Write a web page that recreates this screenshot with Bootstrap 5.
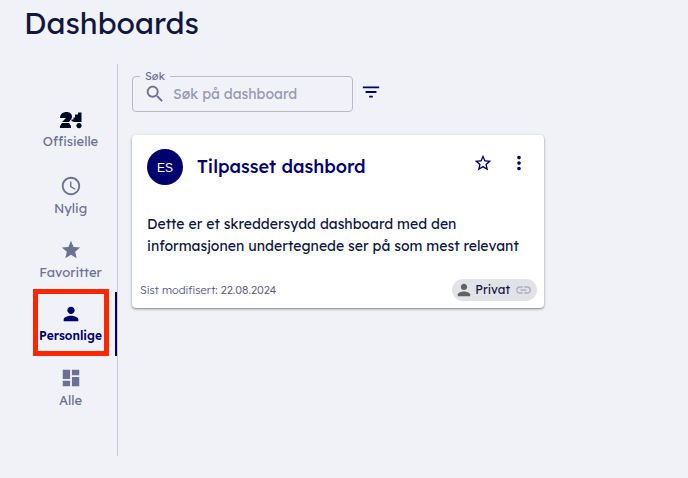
<!DOCTYPE html>
<html lang="no">
<head>
<meta charset="utf-8">
<meta name="viewport" content="width=device-width, initial-scale=1">
<title>Dashboards</title>
<link href="https://cdn.jsdelivr.net/npm/bootstrap@5.3.0/dist/css/bootstrap.min.css" rel="stylesheet">
<style>
  :root { --ink: #0f1740; --brand: #00006e; --muted: #6b7094; }
  body { background: #f1f2f8; color: var(--ink); font-family: "Lexend Deca", Lexend, Inter, sans-serif; font-weight: 400; }
  svg { display: block; fill: currentColor; }
  .page-title { font-size: 30px; line-height: 40px; font-weight: 400; padding: 3px 24px 21px; }
  .side-nav { width: 94px; height: 392px; border-right: 1px solid #c9cad3; }
  .side-nav .nav-link { height: 64px; padding: 0; gap: 2px; color: var(--muted); font-size: 13px; line-height: 18px; font-weight: 400; }
  .side-nav .nav-link.active { color: var(--brand); font-size: 12px; font-weight: 600; box-shadow: inset -2px 0 var(--brand); }
  .brand-mark { fill: #020a24; }
  .marker { position: absolute; left: 9px; right: 8px; top: -3px; bottom: 0; border: 5px solid #ff2600; pointer-events: none; }
  .main-area { padding: 8px 14px; }
  .toolbar { padding: 4px 0 23px; }
  .search-box { width: 221px; height: 36px; border: 1px solid #b8bac4; border-radius: 4px; padding: 0 13px 0 11px; gap: 7px; color: var(--muted); }
  .search-box label { position: absolute; left: 7px; top: -8px; padding: 0 5px; background: #f1f2f8; font-size: 11px; line-height: 14px; }
  .search-box input { font-size: 14px; line-height: 20px; color: var(--ink); }
  .search-box input::placeholder { color: #9598b2; opacity: 1; }
  .icon-btn { color: var(--brand); line-height: 1; }
  .dash-card { max-width: 412px; border-radius: 4px; box-shadow: 0 1px 2px rgba(0,0,0,.4), 0 1px 4px rgba(0,0,0,.1); color: var(--ink); }
  .dash-head { padding: 14px 15px 0; }
  .avatar { width: 36px; height: 36px; background: var(--brand); font: 12px/20px "Liberation Sans", sans-serif; padding-top: 2px; }
  .dash-title { font-size: 18px; line-height: 24px; font-weight: 500; color: var(--brand); padding-left: 14px; }
  .dash-text { font-size: 14px; line-height: 22px; padding: 28px 15px 22px; }
  .dash-foot { padding: 0 7px 7px 8px; }
  .dash-date { font-size: 11px; line-height: 16px; font-weight: 300; color: #4f5580; }
  .privacy { height: 22px; padding: 0 4px 0 5px; background: #e2e3e9; font-size: 12px; line-height: 16px; }
  .privacy .who { fill: #616161; }
  .privacy .chain { fill: #adb0c0; }
</style>
<script src="https://cdn.jsdelivr.net/npm/bootstrap@5.3.0/dist/js/bootstrap.bundle.min.js"></script>
</head>
<body>
<h1 class="page-title m-0">Dashboards</h1>
<div class="d-flex">
  <nav class="side-nav nav flex-column flex-nowrap justify-content-center flex-shrink-0 ms-4" aria-label="Kategorier">
    <a href="#" class="nav-link pb-1 d-flex flex-column align-items-center justify-content-center">
      <svg class="brand-mark" width="22" height="20" viewBox="0 0 22 20"><path d="M0 8C0 4 3 2 6.500 2 12 2 13.500 7 10.500 10L9 12H2l4-4zM0 18v-2l2-3h7l2 3v2zM11.500 9.500h2v-2h1.500v-3h3V2.500h3.500V12H14l-2.500-1zM19 13a2.600 2.600 0 1 1-.01 0z"/></svg>
      Offisielle
    </a>
    <a href="#" class="nav-link d-flex flex-column align-items-center justify-content-center">
      <svg width="22" height="22" viewBox="0 0 24 24"><path d="M11.990 2C6.470 2 2 6.480 2 12s4.470 10 9.990 10C17.520 22 22 17.520 22 12S17.520 2 11.990 2zM12 20c-4.420 0-8-3.580-8-8s3.580-8 8-8 8 3.580 8 8-3.580 8-8 8zm.5-13H11v6l5.250 3.150.75-1.230-4.500-2.670z"/></svg>
      Nylig
    </a>
    <a href="#" class="nav-link d-flex flex-column align-items-center justify-content-center">
      <svg width="22" height="22" viewBox="0 0 24 24"><path d="M12 17.270 18.180 21l-1.640-7.030L22 9.240l-7.190-.61L12 2 9.190 8.630 2 9.240l5.460 4.730L5.820 21z"/></svg>
      Favoritter
    </a>
    <a href="#" class="nav-link active position-relative d-flex flex-column align-items-center justify-content-center" aria-current="page">
      <svg width="22" height="22" viewBox="0 0 24 24"><path d="M12 12c2.210 0 4-1.790 4-4s-1.790-4-4-4-4 1.790-4 4 1.790 4 4 4zm0 2c-2.670 0-8 1.340-8 4v2h16v-2c0-2.660-5.330-4-8-4z"/></svg>
      Personlige
      <span class="marker"></span>
    </a>
    <a href="#" class="nav-link d-flex flex-column align-items-center justify-content-center">
      <svg width="22" height="22" viewBox="0 0 24 24"><path d="M3 13h8V3H3v10zm0 8h8v-6H3v6zm10 0h8V11h-8v10zm0-18v6h8V3h-8z"/></svg>
      Alle
    </a>
  </nav>
  <main class="main-area flex-grow-1">
    <div class="toolbar d-flex align-items-center">
      <div class="search-box position-relative d-flex align-items-center">
        <label for="search">Søk</label>
        <svg width="22" height="22" viewBox="0 0 24 24" class="flex-shrink-0"><path d="M15.500 14h-.79l-.28-.27C15.410 12.590 16 11.110 16 9.500 16 5.910 13.090 3 9.500 3S3 5.910 3 9.500 5.910 16 9.500 16c1.610 0 3.090-.59 4.230-1.570l.27.28v.79l5 4.990L20.490 19l-4.990-5zm-6 0C7.010 14 5 11.990 5 9.500S7.010 5 9.500 5 14 7.010 14 9.500 11.990 14 9.500 14z"/></svg>
        <input id="search" type="text" class="form-control border-0 bg-transparent shadow-none p-0" placeholder="Søk på dashboard">
      </div>
      <button type="button" class="btn p-0 pb-1 ms-2 border-0 icon-btn" aria-label="Filter"><svg width="20" height="22" viewBox="1 0 22 24"><path d="M10 18h4v-2h-4v2zM3 6v2h18V6H3zm3 7h12v-2H6v2z"/></svg></button>
    </div>
    <article class="dash-card card border-0">
      <div class="dash-head d-flex align-items-center">
        <span class="avatar rounded-circle text-white d-flex align-items-center justify-content-center flex-shrink-0">ES</span>
        <h2 class="dash-title m-0 flex-grow-1">Tilpasset dashbord</h2>
        <button type="button" class="btn p-0 pb-2 border-0 icon-btn me-3" aria-label="Favoritt"><svg width="20" height="20" viewBox="0 0 24 24"><path d="m22 9.240-7.190-.62L12 2 9.190 8.630 2 9.240l5.460 4.730L5.820 21 12 17.270 18.180 21l-1.630-7.030L22 9.240zM12 15.400l-3.760 2.270 1-4.280-3.320-2.880 4.380-.38L12 6.100l1.710 4.040 4.380.38-3.320 2.880 1 4.280L12 15.400z"/></svg></button>
        <button type="button" class="btn p-0 pb-2 border-0 icon-btn" aria-label="Flere valg"><svg width="20" height="22" viewBox="1 0 22 24"><path d="M12 8c1.100 0 2-.9 2-2s-.9-2-2-2-2 .9-2 2 .9 2 2 2zm0 2c-1.100 0-2 .9-2 2s.9 2 2 2 2-.9 2-2-.9-2-2-2zm0 6c-1.100 0-2 .9-2 2s.9 2 2 2 2-.9 2-2-.9-2-2-2z"/></svg></button>
      </div>
      <p class="dash-text m-0">Dette er et skreddersydd dashboard med den informasjonen undertegnede ser på som mest relevant</p>
      <div class="dash-foot d-flex align-items-center justify-content-between">
        <span class="dash-date">Sist modifisert: 22.08.2024</span>
        <span class="privacy rounded-pill d-flex align-items-center">
          <svg class="who" width="14" height="14" viewBox="3 3 18 18"><path d="M12 12c2.210 0 4-1.790 4-4s-1.790-4-4-4-4 1.790-4 4 1.790 4 4 4zm0 2c-2.670 0-8 1.340-8 4v2h16v-2c0-2.660-5.330-4-8-4z"/></svg>
          <span class="px-1">Privat</span>
          <svg class="chain" width="19" height="18" viewBox="0 0 24 24"><path d="M3.900 12c0-1.710 1.390-3.100 3.100-3.100h4V7H7c-2.760 0-5 2.240-5 5s2.240 5 5 5h4v-1.900H7c-1.710 0-3.100-1.390-3.100-3.100zM8 13h8v-2H8v2zm9-6h-4v1.900h4c1.710 0 3.100 1.390 3.100 3.100s-1.390 3.100-3.100 3.100h-4V17h4c2.760 0 5-2.240 5-5s-2.240-5-5-5z"/></svg>
        </span>
      </div>
    </article>
  </main>
</div>
</body>
</html>
